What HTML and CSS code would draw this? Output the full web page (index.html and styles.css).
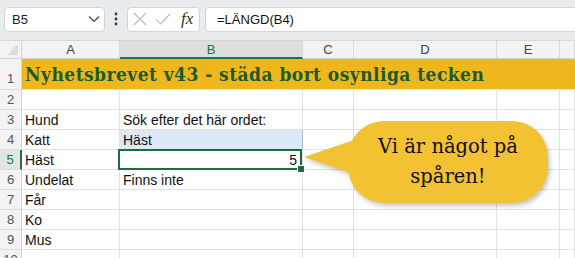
FILE: index.html
```html
<!DOCTYPE html>
<html lang="sv">
<head>
  <meta charset="UTF-8">
  <title>Nyhetsbrevet v43</title>
  <link rel="stylesheet" href="styles.css">
</head>
<body>
  <div class="app">
    <div class="toolbar">
      <div class="namebox">
        <span>B5</span>
        <svg class="chevron" width="12" height="8" viewBox="0 0 12 8"><polyline points="1,1.5 6,6.5 11,1.5" fill="none" stroke="#444" stroke-width="1.2"/></svg>
      </div>
      <svg class="dots" width="4" height="14" viewBox="0 0 4 14"><circle cx="2" cy="2" r="1.4" fill="#333"/><circle cx="2" cy="7" r="1.4" fill="#333"/><circle cx="2" cy="12" r="1.4" fill="#333"/></svg>
      <div class="fxbuttons">
        <svg width="14" height="14" viewBox="0 0 14 14"><path d="M1 1 L13 13 M13 1 L1 13" stroke="#b9b9b9" stroke-width="1.1"/></svg>
        <svg width="16" height="12" viewBox="0 0 16 12"><polyline points="1,6 5.5,11 15,1" fill="none" stroke="#b9b9b9" stroke-width="1.1"/></svg>
        <span class="fx">fx</span>
      </div>
      <div class="formula">=LÄNGD(B4)</div>
    </div>

    <div class="sheet">
      <div class="corner"></div>
      <div class="colhead">A</div>
      <div class="colhead active">B</div>
      <div class="colhead">C</div>
      <div class="colhead">D</div>
      <div class="colhead">E</div>
      <div class="colhead"></div>

      <div class="rowhead tall">1</div>
      <div class="title">Nyhetsbrevet v43 - städa bort osynliga tecken</div>

      <div class="rowhead">2</div>
      <div class="cell"></div><div class="cell"></div><div class="cell"></div><div class="cell"></div><div class="cell"></div><div class="cell"></div>

      <div class="rowhead">3</div>
      <div class="cell">Hund</div><div class="cell">Sök efter det här ordet:</div><div class="cell"></div><div class="cell"></div><div class="cell"></div><div class="cell"></div>

      <div class="rowhead">4</div>
      <div class="cell">Katt</div><div class="cell search">Häst</div><div class="cell"></div><div class="cell"></div><div class="cell"></div><div class="cell"></div>

      <div class="rowhead active">5</div>
      <div class="cell">Häst</div><div class="cell num selected">5</div><div class="cell"></div><div class="cell"></div><div class="cell"></div><div class="cell"></div>

      <div class="rowhead">6</div>
      <div class="cell">Undelat</div><div class="cell">Finns inte</div><div class="cell"></div><div class="cell"></div><div class="cell"></div><div class="cell"></div>

      <div class="rowhead">7</div>
      <div class="cell">Får</div><div class="cell"></div><div class="cell"></div><div class="cell"></div><div class="cell"></div><div class="cell"></div>

      <div class="rowhead">8</div>
      <div class="cell">Ko</div><div class="cell"></div><div class="cell"></div><div class="cell"></div><div class="cell"></div><div class="cell"></div>

      <div class="rowhead">9</div>
      <div class="cell">Mus</div><div class="cell"></div><div class="cell"></div><div class="cell"></div><div class="cell"></div><div class="cell"></div>

      <div class="rowhead">10</div>
      <div class="cell"></div><div class="cell"></div><div class="cell"></div><div class="cell"></div><div class="cell"></div><div class="cell"></div>
    </div>

    <div class="callout">
      <svg class="bubble" width="575" height="258" viewBox="0 0 575 258">
        <g fill="#f2c232" class="bubble-shape">
          <rect x="348" y="121" width="200" height="82" rx="36" ry="36"/>
          <polygon points="304,157 362,137.3 362,176.7"/>
        </g>
      </svg>
      <div class="callout-text">Vi är något på<br>spåren!</div>
    </div>
  </div>
</body>
</html>
```

FILE: styles.css
```css
* {
  box-sizing: border-box;
}
body {
  margin: 0;
  width: 575px;
  height: 258px;
  overflow: hidden;
  background: #fff;
  font-family: "Liberation Sans", Arial, sans-serif;
}
.app {
  position: relative;
  width: 575px;
  height: 258px;
  overflow: hidden;
}

/* formula bar */
.toolbar {
  height: 41px;
  background: #e9ecef;
  border-bottom: 1px solid #d6d6d6;
  display: flex;
  align-items: center;
  padding: 0 0 2px 4px;
}
.namebox {
  width: 101px;
  height: 25px;
  background: #fff;
  border: 1px solid #d4d4d4;
  border-radius: 4px;
  display: flex;
  align-items: center;
  justify-content: space-between;
  padding: 0 4px 0 7px;
  font-size: 13px;
  color: #222;
}
.dots {
  margin: 0 9px 0 9px;
}
.fxbuttons {
  width: 73px;
  height: 25px;
  background: #fff;
  border: 1px solid #d4d4d4;
  border-radius: 4px;
  display: flex;
  align-items: center;
  gap: 8px;
  padding-left: 5px;
}
.fx {
  font-family: "Liberation Serif", serif;
  font-style: italic;
  font-size: 17px;
  color: #333;
  margin-left: 2px;
}
.formula {
  flex: 1;
  height: 25px;
  margin-left: 5px;
  background: #fff;
  border: 1px solid #d4d4d4;
  border-right: none;
  border-radius: 4px 0 0 4px;
  display: flex;
  align-items: center;
  padding-left: 11px;
  font-size: 13px;
  color: #111;
}

/* grid */
.sheet {
  display: grid;
  grid-template-columns: 22px 98px 183px 51px 143px 63px 1fr;
  grid-template-rows: 18px 31px repeat(9, 20px);
}
.corner {
  background: #f3f3f3;
  border-right: 1px solid #d4d4d4;
  border-bottom: 1px solid #d4d4d4;
  position: relative;
}
.corner::after {
  content: "";
  position: absolute;
  right: 3px;
  bottom: 3px;
  border-left: 11px solid transparent;
  border-bottom: 11px solid #dcdcdc;
}
.colhead {
  background: #f3f3f3;
  border-right: 1px solid #dadada;
  border-bottom: 1px solid #d4d4d4;
  font-size: 13px;
  color: #444;
  text-align: center;
  line-height: 17px;
}
.colhead.active {
  background: #dedede;
  border-bottom: 2px solid #217346;
  color: #217346;
}
.rowhead {
  background: #f3f3f3;
  border-right: 1px solid #d4d4d4;
  border-bottom: 1px solid #dcdcdc;
  font-size: 13px;
  color: #555;
  text-align: center;
  display: flex;
  align-items: flex-end;
  justify-content: center;
  padding-bottom: 2px;
}
.rowhead.tall {
  padding-bottom: 3px;
}
.rowhead.active {
  color: #217346;
  background: #e4e4e4;
  border-right: 2px solid #217346;
}
.cell {
  border-right: 1px solid #e1e1e1;
  border-bottom: 1px solid #e1e1e1;
  font-size: 14px;
  color: #111;
  display: flex;
  align-items: flex-end;
  padding: 0 3px 1px 3px;
  white-space: nowrap;
}
.cell.search {
  background: #dde9f6;
  border-right-color: #a9c0df;
}
.cell.num {
  justify-content: flex-end;
  padding-right: 5px;
}
.cell.selected {
  position: relative;
}
.cell.selected::after {
  content: "";
  position: absolute;
  top: -1px;
  left: -2px;
  right: 0;
  bottom: -1px;
  border: 2px solid #1e6b3e;
}
.cell.selected::before {
  content: "";
  position: absolute;
  right: -3px;
  bottom: -4px;
  width: 6px;
  height: 6px;
  background: #1e6b3e;
  border: 1px solid #fff;
  z-index: 1;
}
.title {
  grid-column: 2 / -1;
  background: #efb71e;
  border-bottom: 1px solid #e1e1e1;
  font-family: "DejaVu Serif", serif;
  font-weight: bold;
  font-stretch: condensed;
  font-size: 19px;
  letter-spacing: 0.45px;
  color: #1c5a2b;
  display: flex;
  align-items: flex-end;
  padding: 0 0 4px 3px;
  white-space: nowrap;
}

/* callout bubble */
.callout {
  position: absolute;
  left: 0;
  top: 0;
  width: 575px;
  height: 258px;
  pointer-events: none;
}
.bubble {
  position: absolute;
  left: 0;
  top: 0;
}
.bubble-shape {
  filter: drop-shadow(2px 3px 2px rgba(0, 0, 0, 0.22));
}
.callout-text {
  position: absolute;
  left: 348px;
  top: 132px;
  width: 200px;
  text-align: center;
  font-family: "DejaVu Serif", serif;
  font-size: 19.5px;
  line-height: 30px;
  color: #111;
}
```
